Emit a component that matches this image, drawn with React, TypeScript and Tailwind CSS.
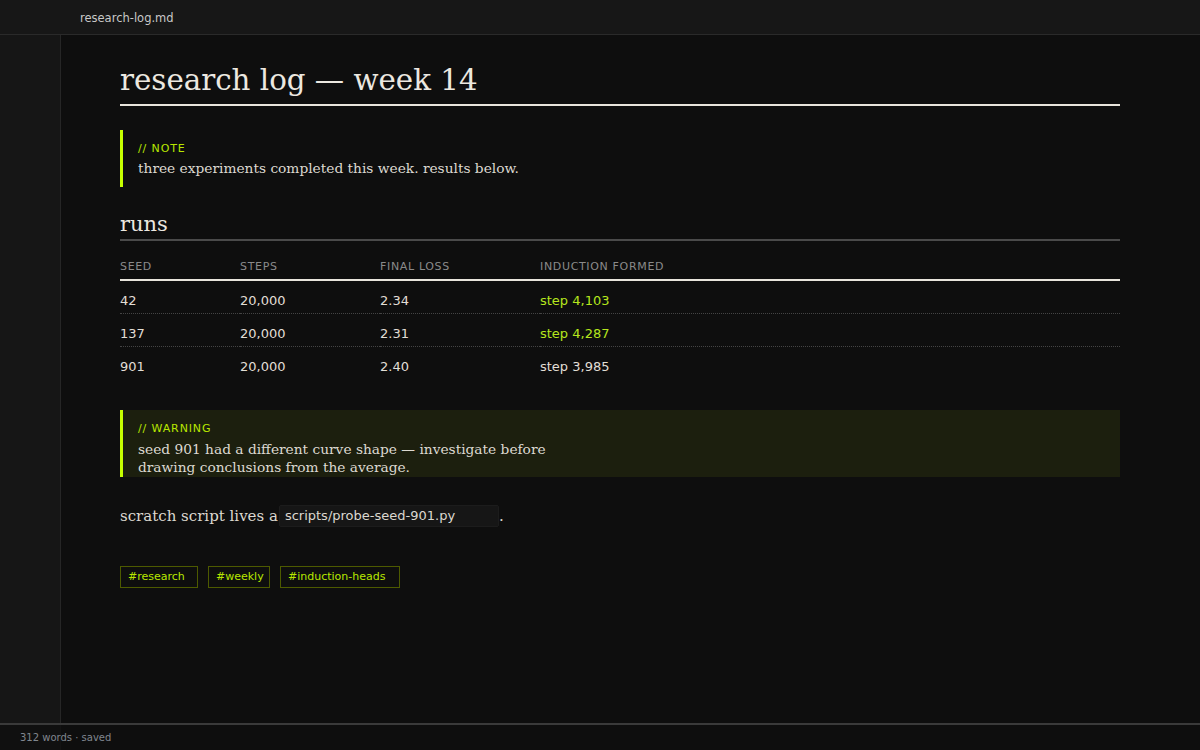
import React from 'react'

const serif = { fontFamily: '"DejaVu Serif", serif' }

const runs = [
  { seed: '42', steps: '20,000', loss: '2.34', formed: 'step 4,103', hit: true },
  { seed: '137', steps: '20,000', loss: '2.31', formed: 'step 4,287', hit: true },
  { seed: '901', steps: '20,000', loss: '2.40', formed: 'step 3,985', hit: false },
]

const tags = [
  { label: '#research', w: 'w-[78px]' },
  { label: '#weekly', w: 'w-[62px]' },
  { label: '#induction-heads', w: 'w-[120px]' },
]

export default function App() {
  return (
    <div className="relative h-[750px] w-[1200px] overflow-hidden bg-[#0e0e0e] text-[#e6e2da] font-['DejaVu_Sans',sans-serif]">
      <div className="flex h-[35px] items-center border-b border-[#2a2a2a] bg-[#171717] pl-20 pt-[4px] text-[11.5px] text-[#c8c8c8]">
        research-log.md
      </div>
      <div className="flex h-[715px]">
        <aside className="w-[61px] shrink-0 border-r border-[#262626] bg-[#161616]" />
        <main className="flex-1 pl-[59px] pt-[27px]">
          <div className="w-[1000px]">
            <h1 style={serif} className="border-b-2 border-[#e8e4dc] pb-[6px] text-[29.3px] leading-[36px] text-[#ece8e0]">
              research log — week 14
            </h1>

            <div className="mt-[24px] border-l-[3px] border-[#c6ff00] pb-[10px] pl-[15px] pt-[12px]">
              <div className="text-[11px] leading-[13px] tracking-[0.08em] text-[#b8e600]">// NOTE</div>
              <p style={serif} className="mt-[4px] text-[13.75px] leading-[18px] text-[#ddd9d1]">
                three experiments completed this week. results below.
              </p>
            </div>

            <h2 style={serif} className="mt-[24px] border-b-2 border-[#4a4a4a] pb-[2px] text-[21px] leading-[26px] text-[#ece8e0]">
              runs
            </h2>

            <table className="mt-[19px] w-full border-collapse text-left">
              <thead>
                <tr className="border-b-2 border-[#e8e4dc] text-[11px] leading-[13px] tracking-[0.06em] text-[#8a8a8a]">
                  <th className="w-[120px] pb-[6px] font-normal">SEED</th>
                  <th className="w-[140px] pb-[6px] font-normal">STEPS</th>
                  <th className="w-[160px] pb-[6px] font-normal">FINAL LOSS</th>
                  <th className="pb-[6px] font-normal">INDUCTION FORMED</th>
                </tr>
              </thead>
              <tbody className="text-[13px] leading-[16px] text-[#e2ded6]">
                {runs.map((r, i) => (
                  <tr
                    key={r.seed}
                    className={i < runs.length - 1 ? 'border-b border-dotted border-[#444]' : ''}
                  >
                    <td className="h-[33px] pt-[12px] align-top">{r.seed}</td>
                    <td className="pt-[12px] align-top">{r.steps}</td>
                    <td className="pt-[12px] align-top">{r.loss}</td>
                    <td className={`pt-[12px] align-top ${r.hit ? 'text-[#b5e61d]' : ''}`}>{r.formed}</td>
                  </tr>
                ))}
              </tbody>
            </table>

            <div className="mt-[31px] border-l-[3px] border-[#c6ff00] bg-[#1c1f0e] pb-[1px] pl-[15px] pt-[12px]">
              <div className="text-[11px] leading-[13px] tracking-[0.08em] text-[#b8e600]">// WARNING</div>
              <p style={serif} className="mt-[5px] max-w-[415px] text-[13.75px] leading-[18px] text-[#ddd9d1]">
                seed 901 had a different curve shape — investigate before drawing conclusions from the average.
              </p>
            </div>

            <p style={serif} className="mt-[28px] flex items-center text-[15px] leading-[22px] text-[#ddd9d1]">
              scratch script lives a
              <code className="ml-[1px] inline-block h-[22px] w-[220px] rounded-[2px] border border-[#1c1c1c] bg-[#161616] px-[5px] font-['DejaVu_Sans',sans-serif] text-[13px] leading-[20px] text-[#dcd8d0]">
                scripts/probe-seed-901.py
              </code>
              <span>.</span>
            </p>

            <div className="mt-[39px] flex gap-[10px]">
              {tags.map((t) => (
                <span
                  key={t.label}
                  className={`h-[22px] border border-[#4d5a00] pl-[7px] text-[11px] leading-[20px] text-[#b8e600] ${t.w}`}
                >
                  {t.label}
                </span>
              ))}
            </div>
          </div>
        </main>
      </div>
      <footer className="absolute bottom-0 left-0 right-0 h-[27px] border-t-2 border-[#3a3a3a] bg-[#0f0f0f]/80 pl-5 text-[10px] leading-[25px] text-[#80868e]">
        312 words · saved
      </footer>
    </div>
  )
}
